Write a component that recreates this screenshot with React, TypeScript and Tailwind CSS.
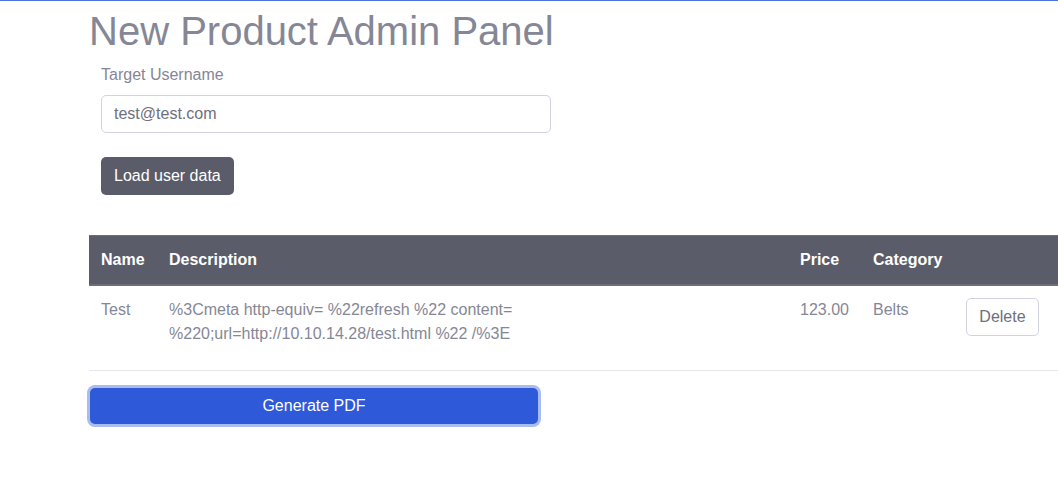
export default function App() {
  return (
    <div className="w-full min-h-[477px] overflow-hidden bg-white border-t border-[#4e73df] font-['Liberation_Sans',Arial,sans-serif] text-[#858796]">
      <div className="pl-[89px]">
        <h1 className="mt-[6px] text-[40px] leading-[48px] text-[#858796]">New Product Admin Panel</h1>

        <div className="pl-[12px] pt-[8px] w-[462px]">
          <label className="block text-[16px] leading-[24px] text-[#858796]">Target Username</label>
          <input
            readOnly
            value="test@test.com"
            className="mt-[8px] block w-[450px] h-[38px] px-[12px] rounded-[5px] border border-[#d1d3e2] text-[16px] text-[#6e707e] outline-none"
          />
          <button className="mt-[24px] h-[38px] px-[13px] rounded-[5px] bg-[#5a5c69] text-white text-[16px]">
            Load user data
          </button>
        </div>

        <table className="mt-[40px] w-[985px] border-collapse text-[16px] leading-[24px]">
          <thead>
            <tr className="bg-[#5a5c69] text-white">
              <th className="w-[68px] px-[12px] py-[12px] text-left font-bold border-t border-[#6b6d7d] border-b-2 border-b-[#6b6d7d]">Name</th>
              <th className="w-[631px] px-[12px] py-[12px] text-left font-bold border-t border-[#6b6d7d] border-b-2 border-b-[#6b6d7d]">Description</th>
              <th className="w-[73px] px-[12px] py-[12px] text-left font-bold border-t border-[#6b6d7d] border-b-2 border-b-[#6b6d7d]">Price</th>
              <th className="w-[93px] px-[12px] py-[12px] text-left font-bold border-t border-[#6b6d7d] border-b-2 border-b-[#6b6d7d]">Category</th>
              <th className="px-[12px] py-[12px] border-t border-[#6b6d7d] border-b-2 border-b-[#6b6d7d]"></th>
            </tr>
          </thead>
          <tbody>
            <tr className="border-b border-[#e3e6f0] align-top">
              <td className="px-[12px] pt-[12px] pb-[24px]">Test</td>
              <td className="px-[12px] pt-[12px] pb-[24px]">
                %3Cmeta http-equiv= %22refresh %22 content=
                <br />
                %220;url=http://10.10.14.28/test.html %22 /%3E
              </td>
              <td className="px-[12px] pt-[12px] pb-[24px]">123.00</td>
              <td className="px-[12px] pt-[12px] pb-[24px]">Belts</td>
              <td className="px-[12px] pt-[12px] pb-[24px]">
                <button className="h-[38px] px-[12px] rounded-[5px] border border-[#d1d3e2] bg-white text-[#6e707e] text-[16px]">
                  Delete
                </button>
              </td>
            </tr>
          </tbody>
        </table>

        <button className="mt-[17px] ml-[1px] w-[448px] h-[36px] rounded-[5px] bg-[#2e59d9] text-white text-[16px] ring-[3px] ring-[#a9bcf0]">
          Generate PDF
        </button>
      </div>
    </div>
  );
}
